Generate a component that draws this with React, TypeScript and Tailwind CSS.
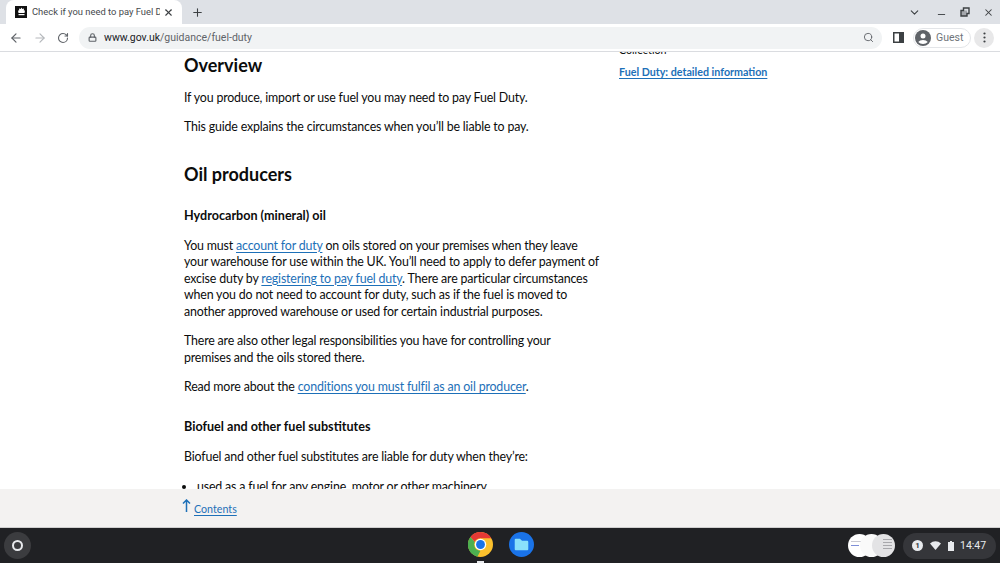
import { ArrowLeft, ArrowRight, ChevronDown, Lock, Minus, Plus, RotateCw, Search, X } from "lucide-react";

const font = { fontFamily: '"Lato", sans-serif' };

function ChromeLogo() {
  return (
    <svg width="25" height="25" viewBox="0 0 48 48">
      <circle cx="24" cy="24" r="24" fill="#fbc02d" />
      <path d="M24 0a24 24 0 0 1 20.8 12H24a12 12 0 0 0-11 7L4.6 9.6A24 24 0 0 1 24 0z" fill="#e53935" />
      <path d="M4.6 9.6 13 19a12 12 0 0 0 11 17l-6 11.4A24 24 0 0 1 4.6 9.6z" fill="#4caf50" />
      <circle cx="24" cy="24" r="11" fill="#fff" />
      <circle cx="24" cy="24" r="8.5" fill="#1a73e8" />
    </svg>
  );
}

function FilesLogo() {
  return (
    <svg width="25" height="25" viewBox="0 0 48 48">
      <circle cx="24" cy="24" r="24" fill="#1a73e8" />
      <path d="M11 15a2 2 0 0 1 2-2h8l4 4h10a2 2 0 0 1 2 2v14a2 2 0 0 1-2 2H13a2 2 0 0 1-2-2z" fill="#8ae0fb" />
    </svg>
  );
}

function Crest() {
  return (
    <span className="flex h-[12px] w-[12px] items-end justify-center bg-[#111] pb-[2px]">
      <svg width="9" height="9" viewBox="0 0 9 9">
        <path d="M4.500 0.500 5.300 2 7 1.500 6.800 3.500 8 3.500 7.500 6H1.500L1 3.500h1.200L2 1.500 3.700 2z" fill="#fff" />
        <rect x="1.500" y="7" width="6" height="1.200" fill="#fff" />
      </svg>
    </span>
  );
}

function TextLink({ children }: { children: React.ReactNode }) {
  return <a className="text-[#1d70b8] underline decoration-1 underline-offset-2">{children}</a>;
}

export default function App() {
  return (
    <div className="flex h-[563px] w-[1000px] flex-col overflow-hidden bg-white" style={font}>
      {/* tab strip */}
      <div className="flex h-[24px] shrink-0 items-end bg-[#dee1e6] pl-[6px]" style={{ fontFamily: '"Roboto", sans-serif' }}>
        <div className="flex h-[24px] w-[176px] items-center rounded-t-[8px] bg-white pl-[9px] pr-[6px]">
          <Crest />
          <span className="ml-[5px] w-[128px] overflow-hidden whitespace-nowrap text-[9.400px] text-[#45494d]">
            Check if you need to pay Fuel Duty
          </span>
          <X size={11} strokeWidth={2.4} className="ml-[3px] text-[#3c4043]" />
        </div>
        <div className="ml-[9px] flex h-[24px] items-center">
          <Plus size={13} strokeWidth={2} className="text-[#3c4043]" />
        </div>
        <div className="ml-auto flex h-[24px] items-center pr-[6px] text-[#3c4043]">
          <ChevronDown size={13} strokeWidth={2} />
          <Minus size={11} strokeWidth={2} className="ml-[15px] mt-[5px]" />
          <svg width="10" height="10" viewBox="0 0 10 10" className="ml-[13px]">
            <path d="M3.5 1h5.5v5.500H7V9H1V3.500h2.500z" fill="none" stroke="#3c4043" strokeWidth="1.400" />
            <rect x="1" y="3.500" width="6" height="5.500" fill="#3c4043" fillOpacity="0.35" />
          </svg>
          <X size={11} strokeWidth={2.2} className="ml-[13px]" />
        </div>
      </div>

      {/* toolbar */}
      <div className="flex h-[28px] shrink-0 items-center border-b border-[#dadce0] bg-white" style={{ fontFamily: '"Roboto", sans-serif' }}>
        <ArrowLeft size={14} strokeWidth={2} className="ml-[9px] text-[#5f6368]" />
        <ArrowRight size={14} strokeWidth={2} className="ml-[10px] text-[#b5b8bc]" />
        <RotateCw size={12} strokeWidth={2.2} className="ml-[10px] text-[#5f6368]" />
        <div className="ml-[10px] flex h-[22px] w-[803px] items-center rounded-full bg-[#f1f3f4] pl-[9px] pr-[8px]">
          <Lock size={9} strokeWidth={3} className="text-[#5f6368]" />
          <span className="ml-[7px] text-[10.500px] text-[#202124]">www.gov.uk</span>
          <span className="text-[10.500px] text-[#5f6368]">/guidance/fuel-duty</span>
          <Search size={11} strokeWidth={2} className="ml-auto text-[#5f6368]" />
        </div>
        <svg width="11" height="11" viewBox="0 0 11 11" className="ml-[11px]">
          <rect x="0.750" y="0.750" width="9.500" height="9.500" fill="none" stroke="#3c4043" strokeWidth="1.500" />
          <rect x="6" y="1" width="4" height="9" fill="#3c4043" />
        </svg>
        <div className="ml-[9px] flex h-[20px] w-[58px] items-center rounded-full border border-[#e3e5e8] pl-[1px]">
          <svg width="16" height="16" viewBox="0 0 16 16">
            <circle cx="8" cy="8" r="8" fill="#5f6368" />
            <circle cx="8" cy="6" r="2.500" fill="#fff" />
            <path d="M3.200 12a5.500 4 0 0 1 9.600 0 6.500 6.500 0 0 1-9.600 0z" fill="#fff" />
          </svg>
          <span className="ml-[5px] text-[10.500px] text-[#70757a]">Guest</span>
        </div>
        <div className="ml-[3px] flex h-[20px] w-[20px] items-center justify-center rounded-full bg-[#e8e8e9]">
          <svg width="3" height="11" viewBox="0 0 3 11" fill="#3c4043">
            <circle cx="1.500" cy="1.500" r="1.100" />
            <circle cx="1.500" cy="5.500" r="1.100" />
            <circle cx="1.500" cy="9.500" r="1.100" />
          </svg>
        </div>
      </div>

      {/* page */}
      <div className="flex min-h-0 flex-1 overflow-hidden pl-[184px] text-[#0b0c0c]">
        <main className="w-[418px] shrink-0 text-[12.400px] leading-[16.500px] tracking-[-0.17px]">
          <h2 className="mt-[2px] text-[18px] font-bold leading-[22px] tracking-normal">Overview</h2>
          <p className="mt-[14px]">If you produce, import or use fuel you may need to pay Fuel Duty.</p>
          <p className="mt-[12px]">This guide explains the circumstances when you’ll be liable to pay.</p>
          <h2 className="mt-[28px] text-[18px] font-bold leading-[22px] tracking-normal">Oil producers</h2>
          <h3 className="mt-[23px] text-[12.600px] font-bold tracking-normal">Hydrocarbon (mineral) oil</h3>
          <p className="mt-[13px]">
            You must <TextLink>account for duty</TextLink> on oils stored on your premises when they leave your warehouse for use within the UK. You’ll need to apply to defer payment of excise duty by <TextLink>registering to pay fuel duty</TextLink>. There are particular circumstances when you do not need to account for duty, such as if the fuel is moved to another approved warehouse or used for certain industrial purposes.
          </p>
          <p className="mt-[13px] max-w-[400px]">
            There are also other legal responsibilities you have for controlling your premises and the oils stored there.
          </p>
          <p className="mt-[13px]">
            Read more about the <TextLink>conditions you must fulfil as an oil producer</TextLink>.
          </p>
          <h3 className="mt-[23px] text-[12.600px] font-bold tracking-normal">Biofuel and other fuel substitutes</h3>
          <p className="mt-[14px]">Biofuel and other fuel substitutes are liable for duty when they’re:</p>
          <ul className="mt-[13px] list-disc pl-[13px]">
            <li>used as a fuel for any engine, motor or other machinery</li>
          </ul>
        </main>
        <aside className="ml-[17px] text-[10.700px] font-bold leading-[14px]">
          <p className="mt-[-9px] font-normal">Collection</p>
          <a className="mt-[8px] block text-[#1d70b8] underline underline-offset-2">Fuel Duty: detailed information</a>
        </aside>
      </div>

      {/* contents bar */}
      <div className="flex h-[38px] shrink-0 items-center bg-[#f3f2f1] pl-[182px] text-[10.700px]">
        <svg width="9" height="13" viewBox="0 0 9 13" fill="none" stroke="#1d70b8" strokeWidth="1.500" className="mt-[-6px]">
          <path d="M4.500 13V1M1 4.500 4.500 1 8 4.500" />
        </svg>
        <span className="ml-[3px] mt-[2px] text-[#1d70b8] underline underline-offset-2">Contents</span>
      </div>

      {/* shelf */}
      <div className="relative flex h-[36px] shrink-0 items-center border-t border-[#cfcfcf] bg-[#202124]" style={{ fontFamily: '"Roboto", sans-serif' }}>
        <div className="ml-[4px] flex h-[27px] w-[27px] items-center justify-center rounded-full bg-[#3b3c3f]">
          <span className="h-[11px] w-[11px] rounded-full border-2 border-[#e8eaed]" />
        </div>
        <div className="absolute left-[468px] top-[4px] flex gap-[16px]">
          <ChromeLogo />
          <FilesLogo />
        </div>
        <span className="absolute bottom-0 left-[477px] h-[2px] w-[7px] bg-[#e8eaed]" />
        <div className="ml-auto flex items-center pr-[4px]">
          <div className="flex">
            <span className="flex h-[23px] w-[23px] flex-col gap-[3px] rounded-full bg-white pl-[3px] pt-[7px]">
              <span className="h-px w-[10px] bg-[#c9c9d2]" />
              <span className="h-px w-[8px] bg-[#7f8fd8]" />
            </span>
            <span className="ml-[-11px] h-[23px] w-[23px] rounded-full bg-[#fafafa]" />
            <span className="ml-[-11px] flex h-[23px] w-[23px] flex-col items-end gap-[2px] rounded-full bg-[#e3e3e5] pr-[3px] pt-[5px]">
              <span className="h-px w-[9px] bg-[#a8a8ac]" />
              <span className="h-px w-[9px] bg-[#a8a8ac]" />
              <span className="h-px w-[9px] bg-[#a8a8ac]" />
              <span className="h-px w-[9px] bg-[#a8a8ac]" />
            </span>
          </div>
          <div className="ml-[8px] flex h-[26px] w-[93px] items-center rounded-full bg-[#35363a] pl-[9px] text-[#e8eaed]">
            <span className="flex h-[11px] w-[11px] items-center justify-center rounded-full bg-[#e8eaed] text-[8px] font-bold text-[#35363a]">1</span>
            <svg width="11" height="9" viewBox="0 0 11 9" className="ml-[7px]">
              <path d="M0 2.500a8 8 0 0 1 11 0L5.500 9z" fill="#e8eaed" />
            </svg>
            <svg width="6" height="10" viewBox="0 0 6 10" className="ml-[7px]">
              <path d="M2 0h2v1h2v9H0V1h2z" fill="#e8eaed" />
            </svg>
            <span className="ml-[6px] text-[10.500px]">14:47</span>
          </div>
        </div>
      </div>
    </div>
  );
}
